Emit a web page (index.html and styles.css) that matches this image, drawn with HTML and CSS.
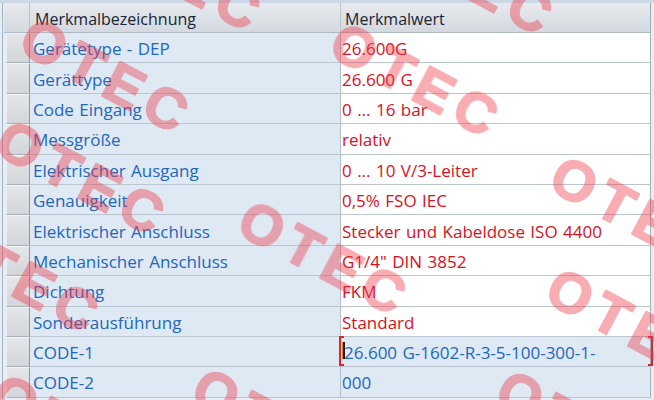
FILE: index.html
```html
<!DOCTYPE html>
<html lang="de">
<head>
<meta charset="utf-8">
<title>Merkmale</title>
<link rel="stylesheet" href="styles.css">
</head>
<body>
<div class="topbar"></div>
<div class="sheet">
  <div class="row head"><div class="h"></div><div class="c1">Merkmalbezeichnung</div><div class="c2">Merkmalwert</div></div>
  <div class="row"><div class="h"></div><div class="c1">Gerätetype - DEP</div><div class="c2 red">26.600G</div></div>
  <div class="row"><div class="h"></div><div class="c1">Gerättype</div><div class="c2 red">26.600 G</div></div>
  <div class="row"><div class="h"></div><div class="c1">Code Eingang</div><div class="c2 red">0 ... 16 bar</div></div>
  <div class="row"><div class="h"></div><div class="c1">Messgröße</div><div class="c2 red">relativ</div></div>
  <div class="row"><div class="h"></div><div class="c1">Elektrischer Ausgang</div><div class="c2 red">0 ... 10 V/3-Leiter</div></div>
  <div class="row"><div class="h"></div><div class="c1">Genauigkeit</div><div class="c2 red">0,5% FSO IEC</div></div>
  <div class="row"><div class="h"></div><div class="c1">Elektrischer Anschluss</div><div class="c2 red">Stecker und Kabeldose ISO 4400</div></div>
  <div class="row"><div class="h"></div><div class="c1">Mechanischer Anschluss</div><div class="c2 red">G1/4" DIN 3852</div></div>
  <div class="row"><div class="h"></div><div class="c1">Dichtung</div><div class="c2 red">FKM</div></div>
  <div class="row"><div class="h"></div><div class="c1">Sonderausführung</div><div class="c2 red">Standard</div></div>
  <div class="row code"><div class="h"></div><div class="c1">CODE-1</div><div class="c2 sel"><span class="caret"></span><span class="br bl"></span><span class="br brr"></span>26.600 G-1602-R-3-5-100-300-1-</div></div>
  <div class="row code"><div class="h"></div><div class="c1">CODE-2</div><div class="c2">000</div></div>
</div>
<svg class="wm" width="654" height="400" viewBox="0 0 654 400" aria-hidden="true">
  <g class="wmtext">
    <text transform="translate(88,-52) rotate(28)">OTEC</text>
    <text transform="translate(380,-48) rotate(28)">OTEC</text>
    <text transform="translate(16,50) rotate(28)">OTEC</text>
    <text transform="translate(326,54) rotate(28)">OTEC</text>
    <text transform="translate(-8,152) rotate(28)">OTEC</text>
    <text transform="translate(546,188) rotate(28)">OTEC</text>
    <text transform="translate(234,232) rotate(28)">OTEC</text>
    <text transform="translate(-74,250) rotate(28)">OTEC</text>
    <text transform="translate(542,300) rotate(28)">OTEC</text>
    <text transform="translate(-13,406) rotate(28)">OTEC</text>
    <text transform="translate(188,400) rotate(28)">OTEC</text>
    <text transform="translate(492,402) rotate(28)">OTEC</text>
  </g>
</svg>
</body>
</html>
```
FILE: styles.css
```css
html, body {
  margin: 0;
  height: 400px;
  overflow: hidden;
}
body {
  position: relative;
  background: #e6edf5;
  font-family: "Open Sans", "DejaVu Sans", sans-serif;
  font-size: 17px;
}
.topbar {
  height: 3px;
  background: #cbd8e6;
}
.sheet {
  margin-left: 2px;
  border-left: 1px solid #9fb4ca;
}
.row {
  display: grid;
  grid-template-columns: 27px 311px 310px;
  height: 30.4px;
}
.row > div {
  box-sizing: border-box;
  display: flex;
  align-items: center;
  padding-top: 2px;
  white-space: nowrap;
  overflow: hidden;
  word-spacing: 1px;
}
.h {
  margin-left: 3px;
  background: linear-gradient(#e4e6e9, #d2d5d9);
  border-top: 1px solid #f3f4f5;
  border-left: 1px solid #eceef0;
  border-bottom: 1px solid #aab0b7;
  border-right: 1px solid #8e969f;
}
.c1 {
  background: #dfe9f4;
  color: #2167bd;
  padding-left: 3px;
  border-bottom: 1px solid #bac5d0;
  border-right: 1px solid #b3bec9;
}
.c2 {
  background: #ffffff;
  color: #2167bd;
  padding-left: 1px;
  border-bottom: 1px solid #bac5d0;
  border-right: 1px solid #a7b1bc;
}
.c2.red {
  color: #d9101e;
}
.head {
  height: 30px;
}
.head > div {
  background: linear-gradient(#e7eaee, #d3d9e0);
  color: #1b2534;
  border-bottom: 1px solid #b0bac5;
  font-size: 16px;
  word-spacing: 0;
}
.head .h {
  margin-left: 1px;
  border-top: none;
  border-left: none;
  border-right: 1px solid #b9c0c8;
}
.head .c1 {
  padding-left: 5px;
  border-right: 1px solid #bcc4cd;
}
.head .c2 {
  padding-left: 4px;
  border-right: 1px solid #9ea8b3;
}
.code .c2 {
  background: #dfe9f4;
}
.sel {
  position: relative;
  overflow: visible !important;
  padding-left: 3px !important;
}
.caret {
  position: absolute;
  left: 1px;
  top: 5px;
  width: 3px;
  height: 17px;
  background: #1d1a16;
  border-left: 1px solid #d08a2a;
  box-sizing: border-box;
}
.br {
  position: absolute;
  top: -1px;
  bottom: 0;
  width: 5px;
  border: 2px solid #e0232e;
  box-sizing: border-box;
}
.bl {
  left: -2px;
  border-right: none;
}
.brr {
  right: -3px;
  border-left: none;
}
.wm {
  position: absolute;
  left: 0;
  top: 0;
  pointer-events: none;
}
.wmtext {
  fill: #ee3d4b;
  stroke: #ee3d4b;
  stroke-width: 2px;
  stroke-linejoin: round;
  opacity: 0.42;
  font-family: "Liberation Sans", sans-serif;
  font-weight: bold;
  font-size: 56px;
  letter-spacing: 8px;
}
```
